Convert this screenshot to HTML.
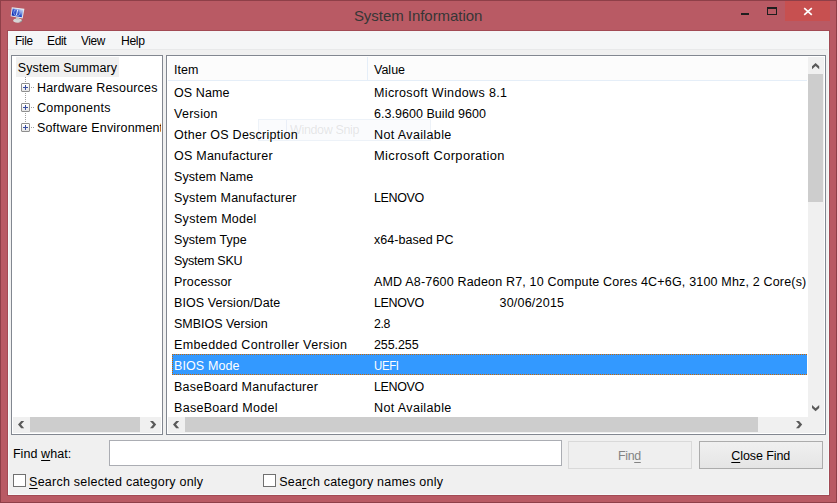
<!DOCTYPE html>
<html><head><meta charset="utf-8"><style>
html,body{margin:0;padding:0;width:837px;height:503px;overflow:hidden;background:#B95A64;}
body{position:relative;font-family:"Liberation Sans",sans-serif;}
.t{position:absolute;white-space:nowrap;}
u{text-decoration:underline;text-underline-offset:2px;}
</style></head><body>
<div style="position:absolute;left:0;top:0;width:837px;height:503px;background:#B95A64;box-shadow:inset 0 0 0 1px #8E3F48;"></div>
<div style="position:absolute;left:8px;top:31px;width:821px;height:464px;background:#F0F0F0;"></div>
<div style="position:absolute;left:828px;top:31px;width:1px;height:464px;background:#F6F9F9;"></div>
<div style="position:absolute;left:8px;top:494px;width:821px;height:1px;background:#F6F9F9;"></div>
<div style="position:absolute;left:8px;top:31px;width:1px;height:464px;background:#F6F9F9;"></div>
<div style="position:absolute;left:829px;top:30px;width:1px;height:466px;background:#A24A54;"></div>
<div style="position:absolute;left:7px;top:30px;width:1px;height:466px;background:#A24A54;"></div>
<div style="position:absolute;left:7px;top:30px;width:823px;height:1px;background:#A24A54;"></div>
<div style="position:absolute;left:8px;top:495px;width:822px;height:1px;background:#A24A54;"></div>
<svg style="position:absolute;left:0;top:0" width="30" height="30" viewBox="0 0 30 30">
<defs><linearGradient id="scr" x1="0.1" y1="0.9" x2="0.95" y2="0.05"><stop offset="0" stop-color="#0A28A8"/><stop offset="0.4" stop-color="#2448C8"/><stop offset="0.7" stop-color="#8CA4E4"/><stop offset="1" stop-color="#DCE4F8"/></linearGradient></defs>
<ellipse cx="17.6" cy="20.6" rx="4.4" ry="2.1" fill="#D6D6D6"/>
<path d="M19.5 22.2 Q22.3 21.8 22.2 20.2" stroke="#7A7A7A" stroke-width="0.8" fill="none"/>
<rect x="16" y="17.4" width="3.2" height="2.2" fill="#C4C4C4"/>
<polygon points="11.8,7.3 24.4,8.8 22.6,18.4 10.7,16.3" fill="#E6EAEE"/>
<polygon points="12.7,8.4 23.4,9.7 21.8,17.3 11.6,15.6" fill="url(#scr)"/>
<ellipse cx="16.9" cy="12.6" rx="3.2" ry="3.3" fill="#3A5CCC" fill-opacity="0.5" stroke="#9AB0E8" stroke-width="0.8"/>
<line x1="17.7" y1="9.8" x2="16.4" y2="15.2" stroke="#F4F8FF" stroke-width="0.9"/>
</svg>
<div class="t" style="left:353.90px;top:6.90px;font-size:15px;line-height:18px;letter-spacing:-0.042px;color:#363636;">System Information</div>
<div style="position:absolute;left:741px;top:13px;width:8px;height:2px;background:#1E1E1E;"></div>
<div style="position:absolute;left:767px;top:7px;width:10px;height:8px;box-sizing:border-box;border:1px solid #1E1E1E;border-top-width:2px;"></div>
<div style="position:absolute;left:785px;top:1px;width:45px;height:20px;background:#C75050;"></div>
<svg style="position:absolute;left:803px;top:7px" width="10" height="9" viewBox="0 0 10 9"><path d="M1.2 1.2 L8.8 7.8 M8.8 1.2 L1.2 7.8" stroke="#FFFFFF" stroke-width="1.7"/></svg>
<div style="position:absolute;left:8px;top:31px;width:820px;height:18px;background:#F5F6F7;"></div>
<div style="position:absolute;left:8px;top:49px;width:820px;height:1px;background:#E8E9EA;"></div>
<div class="t" style="left:15.30px;top:33.67px;font-size:12.5px;line-height:15px;letter-spacing:-0.350px;color:#000;transform:scaleX(0.9429);transform-origin:0.00px 0;">File</div>
<div class="t" style="left:47.30px;top:33.67px;font-size:12.5px;line-height:15px;letter-spacing:-0.350px;color:#000;transform:scaleX(0.9614);transform-origin:0.00px 0;">Edit</div>
<div class="t" style="left:81.30px;top:33.67px;font-size:12.5px;line-height:15px;letter-spacing:-0.350px;color:#000;transform:scaleX(0.9439);transform-origin:0.00px 0;">View</div>
<div class="t" style="left:120.60px;top:33.67px;font-size:12.5px;line-height:15px;letter-spacing:-0.350px;color:#000;transform:scaleX(0.9732);transform-origin:0.00px 0;">Help</div>
<div style="position:absolute;left:11px;top:55px;width:152px;height:380px;box-sizing:border-box;border:1px solid #828790;background:#FFFFFF;"></div>
<div style="position:absolute;left:16px;top:57px;width:103px;height:20px;background:#F0F0F0;"></div>
<div class="t" style="left:17.80px;top:61.47px;font-size:12.5px;line-height:15px;letter-spacing:0.036px;color:#000;">System Summary</div>
<div style="position:absolute;left:25px;top:77px;width:1px;height:50px;background:repeating-linear-gradient(to bottom,#A0A0A0 0 1px,transparent 1px 2px);"></div>
<div style="position:absolute;left:31px;top:87px;width:4px;height:1px;background:repeating-linear-gradient(to right,#A0A0A0 0 1px,transparent 1px 2px);"></div>
<div style="position:absolute;left:21px;top:83px;width:9px;height:9px;box-sizing:border-box;border:1px solid #8F8F8F;border-radius:1px;background:linear-gradient(#FFFFFF,#E6E6E6);"></div>
<div style="position:absolute;left:23px;top:87px;width:5px;height:1px;background:#3A4FA0;"></div>
<div style="position:absolute;left:25px;top:85px;width:1px;height:5px;background:#3A4FA0;"></div>
<div style="position:absolute;left:31px;top:107px;width:4px;height:1px;background:repeating-linear-gradient(to right,#A0A0A0 0 1px,transparent 1px 2px);"></div>
<div style="position:absolute;left:21px;top:103px;width:9px;height:9px;box-sizing:border-box;border:1px solid #8F8F8F;border-radius:1px;background:linear-gradient(#FFFFFF,#E6E6E6);"></div>
<div style="position:absolute;left:23px;top:107px;width:5px;height:1px;background:#3A4FA0;"></div>
<div style="position:absolute;left:25px;top:105px;width:1px;height:5px;background:#3A4FA0;"></div>
<div style="position:absolute;left:31px;top:127px;width:4px;height:1px;background:repeating-linear-gradient(to right,#A0A0A0 0 1px,transparent 1px 2px);"></div>
<div style="position:absolute;left:21px;top:123px;width:9px;height:9px;box-sizing:border-box;border:1px solid #8F8F8F;border-radius:1px;background:linear-gradient(#FFFFFF,#E6E6E6);"></div>
<div style="position:absolute;left:23px;top:127px;width:5px;height:1px;background:#3A4FA0;"></div>
<div style="position:absolute;left:25px;top:125px;width:1px;height:5px;background:#3A4FA0;"></div>
<div style="position:absolute;left:12px;top:56px;width:149px;height:360px;overflow:hidden;"><div class="t" style="left:25.00px;top:24.67px;font-size:12.5px;line-height:15px;letter-spacing:0.176px;color:#000;">Hardware Resources</div>
<div class="t" style="left:25.00px;top:44.67px;font-size:12.5px;line-height:15px;letter-spacing:0.281px;color:#000;">Components</div>
<div class="t" style="left:25.00px;top:64.67px;font-size:12.5px;line-height:15px;letter-spacing:0.164px;color:#000;">Software Environment</div>
</div>
<div style="position:absolute;left:13px;top:417px;width:148px;height:16px;background:#F0F0F0;"></div>
<div style="position:absolute;left:30px;top:417px;width:110px;height:15px;background:#CDCDCD;"></div>
<svg style="position:absolute;left:18px;top:421px" width="7" height="8" viewBox="0 0 7 8"><polygon points="3.2,0 0,3.6 3.2,7.2 6.2,7.2 3,3.6 6.2,0" fill="#5A5A5A"/></svg>
<svg style="position:absolute;left:150px;top:421px" width="7" height="8" viewBox="0 0 7 8"><polygon points="3,0 6.2,3.6 3,7.2 0,7.2 3.2,3.6 0,0" fill="#5A5A5A"/></svg>
<div style="position:absolute;left:166px;top:55px;width:660px;height:380px;box-sizing:border-box;border:1px solid #828790;background:#FFFFFF;"></div>
<div style="position:absolute;left:168px;top:57px;width:640px;height:23px;background:#FCFCFC;"></div>
<div style="position:absolute;left:168px;top:80px;width:639px;height:1px;background:#E5EEF8;"></div>
<div style="position:absolute;left:367px;top:57px;width:1px;height:23px;background:#E5EEF8;"></div>
<div class="t" style="left:174.00px;top:62.97px;font-size:12.5px;line-height:15px;letter-spacing:0.000px;color:#000;">Item</div>
<div class="t" style="left:374.00px;top:62.97px;font-size:12.5px;line-height:15px;letter-spacing:0.000px;color:#000;">Value</div>
<div style="position:absolute;left:258px;top:119px;width:173px;height:22px;box-sizing:border-box;border:1px solid rgba(205,218,238,0.28);background:rgba(238,242,250,0.3);"></div>
<div style="position:absolute;left:286px;top:120px;width:1px;height:20px;background:rgba(200,215,235,0.35);"></div>
<div class="t" style="left:290.00px;top:122.67px;font-size:12.5px;line-height:15px;letter-spacing:-0.345px;color:rgba(150,150,150,0.22);">Window Snip</div>
<div style="position:absolute;left:167px;top:81px;width:641px;height:335px;overflow:hidden;"><div class="t" style="left:7.00px;top:4.67px;font-size:12.5px;line-height:15px;letter-spacing:0.103px;color:#000;">OS Name</div>
<div class="t" style="left:207.00px;top:4.67px;font-size:12.5px;line-height:15px;letter-spacing:0.350px;color:#000;transform:scaleX(1.0020);transform-origin:0.00px 0;">Microsoft Windows 8.1</div>
<div class="t" style="left:7.00px;top:25.67px;font-size:12.5px;line-height:15px;letter-spacing:0.285px;color:#000;">Version</div>
<div class="t" style="left:207.00px;top:25.67px;font-size:12.5px;line-height:15px;letter-spacing:0.038px;color:#000;">6.3.9600 Build 9600</div>
<div class="t" style="left:7.00px;top:46.67px;font-size:12.5px;line-height:15px;letter-spacing:0.258px;color:#000;">Other OS Description</div>
<div class="t" style="left:207.00px;top:46.67px;font-size:12.5px;line-height:15px;letter-spacing:0.350px;color:#000;transform:scaleX(1.0047);transform-origin:0.00px 0;">Not Available</div>
<div class="t" style="left:7.00px;top:67.67px;font-size:12.5px;line-height:15px;letter-spacing:0.244px;color:#000;">OS Manufacturer</div>
<div class="t" style="left:207.00px;top:67.67px;font-size:12.5px;line-height:15px;letter-spacing:0.350px;color:#000;transform:scaleX(1.0317);transform-origin:0.00px 0;">Microsoft Corporation</div>
<div class="t" style="left:7.00px;top:88.67px;font-size:12.5px;line-height:15px;letter-spacing:0.081px;color:#000;">System Name</div>
<div class="t" style="left:7.00px;top:109.67px;font-size:12.5px;line-height:15px;letter-spacing:0.206px;color:#000;">System Manufacturer</div>
<div class="t" style="left:207.00px;top:109.67px;font-size:12.5px;line-height:15px;letter-spacing:-0.350px;color:#000;transform:scaleX(0.9970);transform-origin:0.00px 0;">LENOVO</div>
<div class="t" style="left:7.00px;top:130.67px;font-size:12.5px;line-height:15px;letter-spacing:0.283px;color:#000;">System Model</div>
<div class="t" style="left:7.00px;top:151.67px;font-size:12.5px;line-height:15px;letter-spacing:0.078px;color:#000;">System Type</div>
<div class="t" style="left:207.00px;top:151.67px;font-size:12.5px;line-height:15px;letter-spacing:0.026px;color:#000;">x64-based PC</div>
<div class="t" style="left:7.00px;top:172.67px;font-size:12.5px;line-height:15px;letter-spacing:-0.261px;color:#000;">System SKU</div>
<div class="t" style="left:7.00px;top:193.67px;font-size:12.5px;line-height:15px;letter-spacing:0.179px;color:#000;">Processor</div>
<div class="t" style="left:207.00px;top:193.67px;font-size:12.5px;line-height:15px;letter-spacing:0.178px;color:#000;">AMD A8-7600 Radeon R7, 10 Compute Cores 4C+6G, 3100 Mhz, 2 Core(s)</div>
<div class="t" style="left:7.00px;top:214.67px;font-size:12.5px;line-height:15px;letter-spacing:0.081px;color:#000;">BIOS Version/Date</div>
<div class="t" style="left:207.00px;top:214.67px;font-size:12.5px;line-height:15px;letter-spacing:-0.350px;color:#000;transform:scaleX(0.9970);transform-origin:0.00px 0;">LENOVO</div>
<div class="t" style="left:332.50px;top:214.67px;font-size:12.5px;line-height:15px;letter-spacing:0.216px;color:#000;">30/06/2015</div>
<div class="t" style="left:7.00px;top:235.67px;font-size:12.5px;line-height:15px;letter-spacing:-0.015px;color:#000;">SMBIOS Version</div>
<div class="t" style="left:207.00px;top:235.67px;font-size:12.5px;line-height:15px;letter-spacing:-0.350px;color:#000;transform:scaleX(0.9832);transform-origin:0.00px 0;">2.8</div>
<div class="t" style="left:7.00px;top:256.67px;font-size:12.5px;line-height:15px;letter-spacing:0.350px;color:#000;transform:scaleX(1.0041);transform-origin:0.00px 0;">Embedded Controller Version</div>
<div class="t" style="left:207.00px;top:256.67px;font-size:12.5px;line-height:15px;letter-spacing:-0.097px;color:#000;">255.255</div>
<div style="position:absolute;left:5px;top:273px;width:635px;height:21px;box-sizing:border-box;background:#3399FF;border:1px dotted #CC6600;border-right:none;"></div><div class="t" style="left:7.00px;top:277.67px;font-size:12.5px;line-height:15px;letter-spacing:0.111px;color:#FFFFFF;">BIOS Mode</div>
<div class="t" style="left:207.00px;top:277.67px;font-size:12.5px;line-height:15px;letter-spacing:-0.350px;color:#FFFFFF;transform:scaleX(0.9117);transform-origin:0.00px 0;">UEFI</div>
<div class="t" style="left:7.00px;top:298.67px;font-size:12.5px;line-height:15px;letter-spacing:0.230px;color:#000;">BaseBoard Manufacturer</div>
<div class="t" style="left:207.00px;top:298.67px;font-size:12.5px;line-height:15px;letter-spacing:-0.350px;color:#000;transform:scaleX(0.9970);transform-origin:0.00px 0;">LENOVO</div>
<div class="t" style="left:7.00px;top:319.67px;font-size:12.5px;line-height:15px;letter-spacing:0.302px;color:#000;">BaseBoard Model</div>
<div class="t" style="left:207.00px;top:319.67px;font-size:12.5px;line-height:15px;letter-spacing:0.350px;color:#000;transform:scaleX(1.0047);transform-origin:0.00px 0;">Not Available</div>
</div>
<div style="position:absolute;left:808px;top:57px;width:16px;height:360px;background:#F0F0F0;"></div>
<div style="position:absolute;left:808px;top:74px;width:15px;height:128px;background:#CDCDCD;"></div>
<svg style="position:absolute;left:812px;top:63px" width="8" height="7" viewBox="0 0 8 7"><polygon points="0,3.2 3.6,0 7.2,3.2 7.2,6.2 3.6,3 0,6.2" fill="#5A5A5A"/></svg>
<svg style="position:absolute;left:812px;top:405px" width="8" height="7" viewBox="0 0 8 7"><polygon points="0,0 3.6,3.2 7.2,0 7.2,3 3.6,6.2 0,3" fill="#5A5A5A"/></svg>
<div style="position:absolute;left:168px;top:417px;width:640px;height:16px;background:#F0F0F0;"></div>
<div style="position:absolute;left:185px;top:417px;width:573px;height:15px;background:#CDCDCD;"></div>
<div style="position:absolute;left:808px;top:417px;width:16px;height:16px;background:#F0F0F0;"></div>
<svg style="position:absolute;left:173px;top:421px" width="7" height="8" viewBox="0 0 7 8"><polygon points="3.2,0 0,3.6 3.2,7.2 6.2,7.2 3,3.6 6.2,0" fill="#5A5A5A"/></svg>
<svg style="position:absolute;left:796px;top:421px" width="7" height="8" viewBox="0 0 7 8"><polygon points="3,0 6.2,3.6 3,7.2 0,7.2 3.2,3.6 0,0" fill="#5A5A5A"/></svg>
<div class="t" style="left:12.90px;top:447.47px;font-size:12.5px;line-height:15px;letter-spacing:0.081px;color:#000;">Find <u>w</u>hat:</div>
<div style="position:absolute;left:109px;top:440px;width:453px;height:26px;box-sizing:border-box;border:1px solid #ABADB3;background:#FFFFFF;"></div>
<div style="position:absolute;left:568px;top:441px;width:124px;height:28px;box-sizing:border-box;border:1px solid #D9D9D9;background:#EFEFEF;"></div>
<div style="position:absolute;left:699px;top:441px;width:124px;height:28px;box-sizing:border-box;border:1px solid #ACACAC;background:linear-gradient(#F0F0F0,#E5E5E5);"></div>
<div class="t" style="left:731.30px;top:448.67px;font-size:12.5px;line-height:15px;letter-spacing:-0.083px;color:#000;"><u>C</u>lose Find</div>
<div class="t" style="left:618.45px;top:448.67px;font-size:12.5px;line-height:15px;letter-spacing:-0.350px;color:#838383;transform:scaleX(0.9929);transform-origin:0.00px 0;">Fin<u>d</u></div>
<div style="position:absolute;left:13px;top:474px;width:13px;height:13px;box-sizing:border-box;border:1px solid #707070;background:#FFFFFF;"></div>
<div class="t" style="left:29.10px;top:474.67px;font-size:12.5px;line-height:15px;letter-spacing:0.234px;color:#000;"><u>S</u>earch selected category only</div>
<div style="position:absolute;left:263px;top:474px;width:13px;height:13px;box-sizing:border-box;border:1px solid #707070;background:#FFFFFF;"></div>
<div class="t" style="left:279.20px;top:474.67px;font-size:12.5px;line-height:15px;letter-spacing:0.211px;color:#000;">Sea<u>r</u>ch category names only</div>
</body></html>
